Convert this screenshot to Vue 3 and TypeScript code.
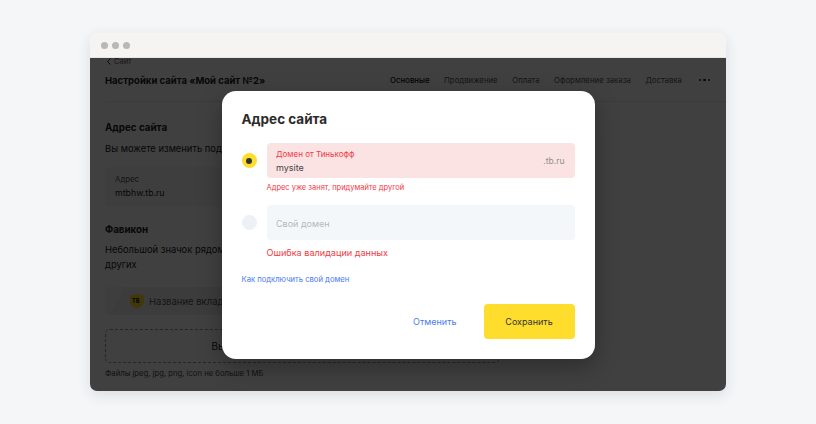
<script setup lang="ts">
const tabs = ['Основные', 'Продвижение', 'Оплата', 'Оформление заказа', 'Доставка']
</script>

<template>
  <div class="page">
    <div class="window">
      <div class="titlebar">
        <i class="dot" /><i class="dot" /><i class="dot" />
      </div>
      <div class="body">
        <div class="back">
          <svg width="6" height="7" viewBox="0 0 6 7" fill="none" stroke="#333" stroke-width="1"><path d="M4.500 .5L1.500 3.500l3 3" /></svg>
          Сайт
        </div>
        <div class="head">
          <div class="head-title">Настройки сайта «Мой сайт №2»</div>
          <div class="tabs">
            <span v-for="(t, i) in tabs" :key="t" class="tab" :class="{ on: i === 0 }">{{ t }}</span>
            <span class="more"><i /><i /><i /></span>
          </div>
        </div>
        <div class="sec-title addr-title">Адрес сайта</div>
        <div class="sec-text">Вы можете изменить поддомен или подключить свой домен</div>
        <div class="addr-box">
          <div class="addr-label">Адрес</div>
          <div class="addr-value">mtbhw.tb.ru</div>
        </div>
        <div class="sec-title fav-title">Фавикон</div>
        <div class="sec-text fav-text">Небольшой значок рядом с названием сайта, который<br />других</div>
        <div class="tab-preview">
          <svg class="shield" width="16" height="16" viewBox="0 0 16 16"><path d="M8 .5c2.400 1.300 4.600 1.900 7 2v6c0 3.200-3 5.700-7 7-4-1.300-7-3.800-7-7v-6c2.400-.1 4.600-.7 7-2z" fill="#ffdd2d" /></svg>
          <span class="tb">ТВ</span>
          <span class="tab-name">Название вкладки</span>
        </div>
        <div class="upload">Выберите файл или перетащите сюда</div>
        <div class="hint">Файлы jpeg, jpg, png, icon не больше 1 МБ</div>

        <div class="overlay">
          <div class="modal">
            <div class="modal-title">Адрес сайта</div>
            <div class="option">
              <span class="radio on"><i /></span>
              <div class="field error">
                <div class="field-main">
                  <div class="field-label">Домен от Тинькофф</div>
                  <div class="field-value">mysite</div>
                </div>
                <span class="suffix">.tb.ru</span>
              </div>
            </div>
            <div class="err small">Адрес уже занят, придумайте другой</div>
            <div class="option second">
              <span class="radio" />
              <div class="field">
                <span class="placeholder">Свой домен</span>
              </div>
            </div>
            <div class="err big">Ошибка валидации данных</div>
            <a class="help">Как подключить свой домен</a>
            <div class="actions">
              <button class="cancel">Отменить</button>
              <button class="save">Сохранить</button>
            </div>
          </div>
        </div>
      </div>
    </div>
  </div>
</template>

<style>
html, body { margin: 0; background: #f5f6f8; }
</style>

<style scoped>
.page { width: 816px; height: 424px; box-sizing: border-box; padding: 33px 90px; background: #f5f6f8; font-family: Inter, 'Noto Sans', sans-serif; overflow: hidden; }
.window { width: 636px; height: 358px; border-radius: 7px; overflow: hidden; display: flex; flex-direction: column; box-shadow: 0 4px 14px rgba(30, 40, 60, 0.12); }
.titlebar { height: 25px; flex-shrink: 0; background: #f6f4f2; border-bottom: 1px solid #e8e6e4; box-sizing: border-box; display: flex; align-items: center; gap: 4px; padding: 1px 0 0 11px; position: relative; z-index: 1; }
.dot { width: 7px; height: 7px; border-radius: 50%; background: #b8b8b8; }
.body { position: relative; flex: 1; background: #fff; overflow: hidden; padding: 0 15px; color: #222; }
.back { display: flex; align-items: center; gap: 2px; height: 8px; margin-top: -1px; font-size: 7.500px; color: #666; padding-left: 1px; }
.head { display: flex; align-items: center; justify-content: space-between; margin: 7px -15px 0 0; height: 16px; padding: 0 15px 13px 0; border-bottom: 1px solid #ececec; }
.head-title { font-size: 9.500px; font-weight: 700; }
.tabs { display: flex; align-items: center; gap: 14.500px; font-size: 7.800px; color: #555; margin-right: 1px; }
.tab.on { color: #111; font-weight: 500; }
.more { display: flex; gap: 2px; margin-left: 2px; }
.more i { width: 2.500px; height: 2.500px; border-radius: 50%; background: #222; }
.sec-title { font-size: 9.800px; font-weight: 700; line-height: 14px; }
.addr-title { margin-top: 19px; }
.sec-text { font-size: 9.400px; line-height: 15px; margin-top: 6px; white-space: nowrap; }
.addr-box { margin-top: 11px; width: 200px; height: 40px; border-radius: 4px; background: #f6f7f8; box-sizing: border-box; padding: 7px 10px; }
.addr-label { font-size: 7.800px; color: #555; line-height: 11px; }
.addr-value { font-size: 8.800px; line-height: 14px; margin-top: 1px; }
.fav-title { margin-top: 16px; }
.fav-text { margin-top: 5px; }
.tab-preview { position: relative; margin-top: 15px; width: 200px; height: 28px; background: linear-gradient(118deg, #f5f6f7 9%, #eeeff0 9.500%); display: flex; align-items: center; padding-left: 24px; box-sizing: border-box; gap: 4px; }
.shield { flex-shrink: 0; }
.tb { position: absolute; left: 27px; top: 10px; font-size: 5.500px; font-weight: 800; color: #222; line-height: 8px; }
.tab-name { font-size: 9.500px; color: #555; white-space: nowrap; }
.upload { margin-top: 14px; width: 395px; height: 34px; box-sizing: border-box; border: 1px dashed #999; border-radius: 5px; display: flex; align-items: center; justify-content: center; font-size: 9.800px; }
.hint { margin-top: 5px; font-size: 7.700px; color: #444; line-height: 11px; white-space: nowrap; }
.overlay { position: absolute; inset: 0; background: rgba(0, 0, 0, 0.75); display: flex; align-items: center; justify-content: center; }
.modal { width: 373px; height: 268px; background: #fff; border-radius: 14px; box-sizing: border-box; padding: 19px 20px 0; box-shadow: 0 8px 24px rgba(0, 0, 0, 0.3); display: flex; flex-direction: column; margin-top: 1px; }
.modal-title { font-size: 13.500px; font-weight: 700; line-height: 18px; color: #2b2b2b; }
.option { display: flex; align-items: center; gap: 10px; margin-top: 15px; }
.option.second { margin-top: 11px; }
.radio { width: 15px; height: 15px; border-radius: 50%; background: #edf0f5; flex-shrink: 0; display: flex; align-items: center; justify-content: center; }
.radio.on { background: #ffdd2d; }
.radio.on i { width: 6px; height: 6px; border-radius: 50%; background: #333; }
.field { flex: 1; height: 35px; border-radius: 4px; background: #f4f7fa; box-sizing: border-box; padding: 0 10px 0 9.500px; display: flex; align-items: center; justify-content: space-between; }
.field.error { background: #fce3e3; }
.field-main { padding-top: 3px; }
.field-label { font-size: 8px; line-height: 11px; color: #f03a45; }
.field-value { font-size: 9px; line-height: 14px; color: #444; margin-top: 1px; }
.suffix { font-size: 8.600px; color: #8e8e8e; }
.placeholder { font-size: 9px; color: #b4b8bd; padding-top: 1px; }
.err { color: #f03a45; margin-left: 25px; }
.err.small { font-size: 7.500px; line-height: 12px; margin-top: 4px; }
.err.big { font-size: 9.100px; line-height: 14px; margin-top: 6px; }
.help { font-size: 7.650px; line-height: 12px; color: #4a7bf0; margin-top: 14px; }
.actions { display: flex; align-items: center; justify-content: flex-end; margin-top: 18px; }
button { font-family: inherit; border: 0; cursor: pointer; font-size: 9px; }
.cancel { background: none; color: #4a7bf0; padding: 0; margin-right: 27px; }
.save { width: 91px; height: 35px; border-radius: 4px; background: #ffdd2d; color: #333; }
</style>
